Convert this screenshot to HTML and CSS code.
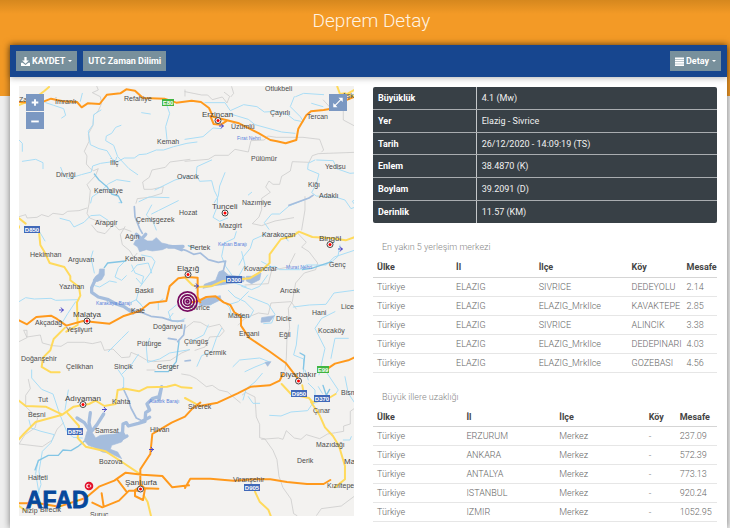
FILE: index.html
```html
<!DOCTYPE html>
<html lang="tr">
<head>
<meta charset="utf-8">
<title>Deprem Detay</title>
<link rel="stylesheet" href="styles.css">
</head>
<body>
<div class="page">
  <header class="banner"><h1>Deprem Detay</h1></header>
  <main class="panel">
    <div class="toolbar">
      <button class="btn" type="button">
        <svg class="icon" viewBox="0 0 16 16" aria-hidden="true"><path d="M6 0h4v6h4L8 12 2 6h4zM0 10h3l5 4 5-4h3v6H0z" fill="#fff"/></svg>
        KAYDET <span class="caret"></span>
      </button>
      <button class="btn" type="button">UTC Zaman Dilimi</button>
      <button class="btn btn-end" type="button">
        <svg class="icon" viewBox="0 0 16 16" aria-hidden="true"><path d="M0 1h16v3H0zM0 5h16v3H0zM0 9h16v3H0zM0 13h16v3H0z" fill="#fff"/></svg>
        Detay <span class="caret"></span>
      </button>
    </div>
    <div class="content">
      <div class="map">
        <svg class="map-canvas" viewBox="19 86 335 430" role="img" aria-label="Harita">
          <rect x="19" y="86" width="335" height="430" fill="#f3f2f0"/>
          <g transform="translate(15 80) scale(.3333)">
            <g class="border">
              <path d="M245 18l5 12-18 8 24 12 4 20-10 22-14 14-2 30-14 26 2 22-14 30 8 14-2 24 12 14 10 6 14-6-8 20-26 28 10 18-4 40-6 28 8 14 20 8 14-2 20 16 16-6 18 20 14-4 22 8M12 410l20-6 4 10 30-2 14-8 20 6 14-10 30 4 14-10 34-2 24-8M525 238l-60 8-14 16-40 8-8 22-20 14 4 22 24 0 34-8-4 20-38 12-36 4-4 14"/>
              <path d="M510 35l50 10 18 0 14 14 30-8 14 18 8-20-16-12M650 20l6 20-8 10M510 244l70-6 20-12 40 0 20-18 40 8 8-34 40-2 10-12 26 4 80 0 50 6 12 32-6 6M925 60l20 22 40 4 0 34 34 18M510 30v18M1020 217l-110 4-18 6-10 20-50-2-6 28-26 16-6 24-20 0-12-10-10 18 14 16-26 18 0 34-8 22-20 20 28 6 40-14 56-10M870 350l0 40 -10 60"/>
            </g>
            <g class="river">
              <path d="M202 40l-6 24M92 68l24 8 30 10 6 20-12 8M258 90l-22 14-2 30-14 20 6 40 26 12 24 6 16 26 14 8 22-12 30 0 14-10 22-2 30-12 22 0 30-10 40-10 30-4M318 136l-16 6-12 18-16 8-2 14 24 14 12 34 34 36 26 18M305 232l-4 12-44 6-24 8-4 18-30 8-40 12-14-14-8-20M450 60l14 40-12 40 4 38M12 180l10 10 0 24M22 244l40-6 22 10 0 18M345 305l-40-6-24 12-20 20-30 20-4 18M135 415l30 8 12 18 30-14 20-20 28-2 24 16M380 98l26 4M320 368l-8 0M372 365l30-14 60 2M410 375l-16 30 20 20 10 25M420 330l60-30 44-12M490 362l-60 30-20 10"/>
              <path d="M570 68l60 0 16 24 40-18 40 6 22 16 40-2 30 10 20 16 20 4M510 178l54-8 30-26 24 2M640 100l60 18 20 16 80 22 40 4M838 50l-12 30 30 30 10 16M842 50l24-10 60 4M890 70l34 10M590 240l-44 20-2 24 10 20 36-2 8 30 10 20-2 30-12 30 20 12 24-10M630 278l-16 40-4 30-12 20M900 240l-20 10-2 18 34 14-8 30-14 26 14 10 60 4 26 8 18 26 16-6-12-16 26-14M905 240l50 2 10 24 40 14 26-2M894 346l-12 8-60 24-28 24-24 0-22 26 14 20M700 345l10-8"/>
            </g>
            <g class="river deep"><path d="M238 282l14 18 24 20 14 22 20 6 10 20"/></g>
            <g class="river wide"><path d="M358 380l2 30 14 36 8 14M894 346l-12 8-60 22"/></g>
            <g class="road yellow"><path d="M12 75l20-8 32-16 24-18 14-12M967 20l8 22 16-2 26 10M993 44l24-14M12 415l20 16"/></g>
            <g class="road"><path d="M12 66l60 4 36-14 36 8 42 2 14 16 18-12 36 2 22-28 40-4 18-12 26 4 24 22 64 2 36 12 46-6 28 4 24 18 12 26 24 6 54 14 60 30 34 20 20 4 26 6 32-10 6-34 24-40 14-12 38-4 36-6 28-22 24-10M586 108l10 24 22 2 18-12"/></g>
          </g>
          <g transform="translate(15 225) scale(.3333)">
            <g class="border">
              <path d="M230 0l16 20 24 6 20-22M330 5l-14 24 6 30 22 18 12 20 10-12M12 350l24-12-10-22 10 0 0 20 40-6 6 24 30 8 26 2 20-12 50 0 24 4 26-6 10 26 26-4 26 26 24-2 4-14 24 10 24 14 20 4 50-4 34-22 24-10"/>
              <path d="M510 310l26-20 20 2 24 14 34-8 14 20-14 16-30 2-14 30-30 10M670 300l20-20 40-16 30 4 8-34 60-4 16 22M844 20l30 32-14 14 22 14 26 34-6 20-34 10-26 30-10 56-12 20 4 60-8 30-2 60-4 36M690 180l70-4 10-40 50-10 20-40"/>
            </g>
            <g class="river">
              <path d="M12 230l20-12 26 4 50-2 14 6 70-2M70 14l20 34M182 230l-24 36-18 30M234 78l-6 20 10 46M240 182l14 4 30-18 20 4M330 108l-20 20-10 28 20 10 14-14M350 140l16-20 34-6 10 30M350 120l10 24 26 10-6 24-16-18M380 90l30 6 10 14-14 34-30 40M370 200l-6 26 20 20M348 232l16-8 14 14M444 222l-14 10 0 22M474 265l-14 18 28 8 22-10M340 320l-20 20-40 40M370 388l-20 30-30 30M404 340l-10 26 4 46 36-10 30-18 60-10M484 240l-24 20 8 26"/>
              <path d="M664 20l-6 20-30 14-8 40 12 30 20 28M760 24l-46 20-8 26-20 24-14 26M680 80l10 40-20 36M740 110l30 16M694 186l-46-16-30 10M640 196l20 20 30 14 26 26-12 22-24-6M700 200l-30 30-26 8M620 224l24 24 6 24M560 224l26 16 22-14M750 130l30-6 14 10 60 0 20-14 60 0 24-24 60-20M758 150l-24 34-24 10-30-10M975 60l-6 34-16 14M800 24l20 24M1017 196l-60 8-24 34-50 2-48 6M960 260l-40 20-20 30 30 60-18 80M700 214l60 24 20 30-10 26-24 2M580 300l-14 30-40 20M620 310l-16 30-14 40-30 12-14 32M1000 340l-40 0-12 60M850 300l-6 60-8 30 30 12 0 40M654 425l20-20 60-6 30 12M690 440l30-14 40-16"/>
            </g>
            <g class="lake">
              <path d="M362 46l20-6 16 8 14 0 12-10 16 16 18 4 2 8-18 8-30 4-18-4-20 6-6-14-12-8zM254 132l14 0 0 18-8 14-14 6-12-4 8-12 10-8zM568 178l34-12 10-26 12-4 16 14 50 6-4 14-44 6-44 6-34 8zM694 154l24 0 20-10-4 20-24 12-16-8zM550 228l26-8 40-8 2 12-34 16-30 2z"/>
              <path d="M740 278l38-6-14 18-26 2zM750 412l18-2-10 14z"/>
            </g>
            <g class="inlet"><path d="M364 28l16 14 12-14M450 62l28 4 22 8M258 150l-18 16-10 22 0 14 20 14 30 8 22 12 24 8 28 20M460 66l44-2"/></g>
            <g class="river wide"><path d="M480 66l32 10 24 12 20-4 24 20 30 8 22-4-8 34M334 250l44 12 30 12 34 4 30 10 34 0M510 300l-4 30-18 20M510 408l16-2M460 340l24 4"/></g>
            <g class="river deep"><path d="M268 128l10-14 54-6M540 70l-20-8M862 134l28-4 60-20M855 384l14 8-4 40M492 350l-8 60-24 30-40 0"/></g>
            <g class="road yellow"><path d="M12 8l0-4M72 20l4 40 12 20 16 34 44 12 18 28 0 12 26 20 4 26-10 20 2 68-34 20M150 308l-34 34-10 34-22 22-4 28 28 16 26 0M512 160l20 20 16 6 40-2 36-16 80-8 30-18 30-28 0-26 34-46 34-8 20-14 40 16 60 4 40 6 40-14 20-4"/></g>
            <g class="road"><path d="M12 286l24 12 28-22 44-4 18 10 28 20 50-14 80 8 40-22 50-16 30-24 50-6 10-44 26-24 28-4 30 2 0 58 8 16M530 232l20-4 24-12 28-2 24 18 20 8 12 22 20 12 0 28 24 36 60 40 50 36 36 46M930 436l30-20 40-10 17-8"/></g>
          </g>
          <g transform="translate(15 370) scale(.3333)">
            <g class="border">
              <path d="M40 28l6 28-14 20 0 34 36 34-8 30-30 20-18 28 70 8 30-20 14-32 20-20M500 12l24 4 20 10 30 24 18-4 20 14 26 6 28 24 10 8M682 75l10-8 28 14 4 60 10 22 0 40 16 4 24 34 12 28 6 50 12 34 24 34 8 44 10 6M740 208l50-4 14 4 10-26 24 22 20 4 16-14 40 12 24-14 24-4 24-4 0-16 20-6 0-38 14-10M905 436l14-20 60-8 40-30M420 0l-24 0"/>
            </g>
            <g class="river">
              <path d="M50 0l0 24 30 34 34 14 20 60 20 50 20 20 28 2M42 150l6 24 30 10 40 10-10 24-26 26-10 60 6 40-10 30M70 270l-8 40 10 60M160 60l-10 60M310 0l16 24 0 30M684 90l10-34 26-20 22-26M700 80l14 20 20 0M764 136l34 2 30-12 50-4 14-20 20-8M880 40l20 20 0 26M930 0l40 60-10 14M910 50l12 20M990 20l10 50 20 30M985 210l20 0 4-10M870 0l10 30"/>
            </g>
            <g class="river deep"><path d="M60 300l10-28 30-16 30 0 14-16 24 2 20-12 20-16M944 58l-10 18-10-30"/></g>
            <g class="river wide"><path d="M324 54l14 30 10 30 16 30 24 12"/></g>
            <g class="lake">
              <path d="M216 184l16 4 10 16 14-8 44-4 24-8 8 12-12 20-30 10-4 12 22 8 12 20-34-16-24-4-20-12-22-8-12-14z"/>
            </g>
            <g class="inlet"><path d="M186 144l22 14 12 18 6 18M226 128l-4 30 6 24M266 132l-20 32-16 20M322 200l2-38 10-4 6 10 30-8 20-6 2-26 12-8-8-18 16-16 20-6 8-30-8 40M318 208l18-10M384 152l20-10"/></g>
            <g class="road yellow"><path d="M12 92l20 16 60 2 50 24 34-24 46-8 20-10 26 16 34-6 6-42 24-4 40 8 24-12 60-2 24-6 20 8 30 2M158 130l34 38-4 36 24 26 60 14 40 26 60 40M12 208l14-16 36-36 80-22M510 84l30 16 14 8M800 42l28 30 54 12 10 12 40-6 30-18M862 46l6 34M888 96l26 40 16 36 24 26 18 30 18 60 0 40-30 24M720 365l14 30 26 24 10 26M386 376l12 20 10 42M12 408l20 14"/></g>
            <g class="road"><path d="M12 400l60 0 60 10 80-26 40-34 46-18 34-24 50 6 60 4 30 34 50-6M232 398l30 14 50-20 30-30 34 0 0-44 0-20 30-46 6-60 34-20 24-14 40-18 20-22 26-20M554 108l54-10 60-28 40-20 56-4 30-14 10-20M308 330l26 34M260 370l6 40M376 350l-16 10 0 18 24 12 6-34-12-12M510 354l16-28 60 0 70 6 60-4 50 0 50 8 60 6 50 0 20-12M430 356l-60-2"/></g>
          </g>
          <g class="city">
            <circle cx="218" cy="120.500" r="3"/><circle cx="225" cy="213" r="3"/><circle cx="330" cy="244.500" r="3"/><circle cx="188" cy="274.500" r="3"/><circle cx="87" cy="321" r="3"/><circle cx="298.500" cy="381" r="3"/><circle cx="83" cy="404.500" r="3"/><circle cx="140.500" cy="489" r="3"/>
          </g>
          <g class="city-dot">
            <circle cx="218" cy="120.500" r="1.500"/><circle cx="225" cy="213" r="1.500"/><circle cx="330" cy="244.500" r="1.500"/><circle cx="188" cy="274.500" r="1.500"/><circle cx="87" cy="321" r="1.500"/><circle cx="298.500" cy="381" r="1.500"/><circle cx="83" cy="404.500" r="1.500"/><circle cx="140.500" cy="489" r="1.500"/>
          </g>
          <path class="plane" d="M219 126h5M221 123.500l2 2.500-2 2.500M338 249h5M340 246.500l2 2.500-2 2.500M194 286h5M196 283.500l2 2.500-2 2.500M59 310h5M61 307.500l2 2.500-2 2.500M102 409.500h5M104 407l2 2.500-2 2.500M149 449.500h5M151 447l2 2.500-2 2.500"/>
          <g class="town">
            <text x="19" y="102">Zara</text><text x="55" y="104">İmranlı</text><text x="124" y="101">Refahiye</text><text x="265" y="91">Otlukbeli</text><text x="342" y="98">Aşk</text><text x="270" y="115">Çayırlı</text><text x="307" y="119">Tercan</text><text x="231" y="129">Üzümlü</text><text x="157" y="144">Kemah</text><text x="110" y="165">İliç</text><text x="56" y="177">Divriği</text><text x="94" y="193">Kemaliye</text><text x="177" y="179">Ovacık</text><text x="251" y="161">Pülümür</text><text x="325" y="169">Yedisu</text><text x="308" y="187">Kiğı</text><text x="319" y="198">Adaklı</text><text x="242" y="205">Nazımiye</text><text x="179" y="215">Hozat</text><text x="136" y="222">Çemişgezek</text><text x="95" y="225">Arapgir</text><text x="219" y="228">Mazgirt</text>
            <text x="262" y="237">Karakoçan</text><text x="125" y="239">Ağın</text><text x="190" y="250">Pertek</text><text x="30" y="257">Hekimhan</text><text x="68" y="262">Arguvan</text><text x="125" y="261">Keban</text><text x="244" y="271">Kovancılar</text><text x="329" y="267">Genç</text><text x="59" y="289">Yazıhan</text><text x="135" y="293">Baskil</text><text x="280" y="293">Arıcak</text><text x="131" y="313">Kale</text><text x="189" y="310">Sivrice</text><text x="228" y="318">Maden</text><text x="35" y="325">Akçadağ</text><text x="66" y="332">Yeşilyurt</text><text x="153" y="329">Doğanyol</text><text x="276" y="321">Dicle</text><text x="312" y="315">Hani</text><text x="341" y="309">Lice</text><text x="239" y="336">Ergani</text><text x="279" y="337">Eğil</text><text x="318" y="333">Kocaköy</text><text x="137" y="346">Pütürge</text><text x="184" y="344">Çüngüş</text><text x="204" y="355">Çermik</text><text x="21" y="361">Doğanşehir</text><text x="66" y="369">Çelikhan</text><text x="114" y="369">Sincik</text><text x="157" y="369">Gerger</text>
            <text x="38" y="402">Tut</text><text x="28" y="417">Besni</text><text x="112" y="404">Kahta</text><text x="188" y="409">Siverek</text><text x="95" y="433">Samsat</text><text x="150" y="432">Hilvan</text><text x="99" y="464">Bozova</text><text x="28" y="480">Halfeti</text><text x="22" y="513">Nizip</text><text x="40" y="512">Birecik</text><text x="90" y="517">Suruç</text><text x="313" y="413">Çınar</text><text x="341" y="395">Bism</text><text x="316" y="447">Mazıdağı</text><text x="297" y="463">Derik</text><text x="233" y="482">Viranşehir</text><text x="327" y="488">Kızıltepe</text>
          </g>
          <g class="capital">
            <text x="202" y="117">Erzincan</text><text x="212" y="209">Tunceli</text><text x="319" y="241">Bingöl</text><text x="177" y="271">Elazığ</text><text x="73" y="317">Malatya</text><text x="280" y="377">Diyarbakır</text><text x="65" y="401">Adıyaman</text><text x="125" y="485">Şanlıurfa</text><text x="344" y="464">Ma</text>
          </g>
          <g class="water-name">
            <text x="237" y="140">Fırat Nehri</text><text x="218" y="246">Keban Barajı</text><text x="96" y="305">Karakaya Barajı</text><text x="286" y="269">Murat Nehri</text><text x="149" y="403">Atatürk Barajı</text>
          </g>
          <g class="shield">
            <rect class="green" x="162" y="99" width="12" height="7"/><rect class="green" x="317" y="366" width="12" height="7"/>
            <rect x="24" y="226" width="16" height="7"/><rect x="226" y="276" width="16" height="7"/><rect x="67" y="428" width="16" height="7"/><rect x="291" y="390" width="16" height="7"/><rect x="314" y="395" width="16" height="7"/><rect x="244" y="484" width="16" height="7"/>
            <text x="168" y="105">E80</text><text x="323" y="372">E99</text><text x="32" y="232">D850</text><text x="234" y="282">D300</text><text x="75" y="434">D875</text><text x="299" y="396">D950</text><text x="322" y="401">D370</text><text x="252" y="490">D905</text>
          </g>
          <g class="epicenter"><circle cx="187.500" cy="301.500" r="9.600"/><circle cx="187.500" cy="301.500" r="6.600"/><circle cx="187.500" cy="301.500" r="3.800"/><circle cx="187.500" cy="301.500" r="1.300"/></g>
          <text class="logo" x="26" y="508">AFAD</text>
          <circle cx="89" cy="486" r="4.300" fill="#e2102a"/><circle cx="88.500" cy="486" r="2.300" fill="#fff"/><circle cx="89.200" cy="486" r="1.800" fill="#e2102a"/><circle cx="90.600" cy="486" r=".8" fill="#fff"/>
        </svg>
        <div class="zoom">
          <button class="map-btn" type="button" aria-label="Yakınlaştır"><svg viewBox="0 0 18 18"><path d="M9 5.500v7M5.500 9h7" stroke="#fff" stroke-width="2"/></svg></button>
          <button class="map-btn" type="button" aria-label="Uzaklaştır"><svg viewBox="0 0 18 18"><path d="M5 10h8" stroke="#fff" stroke-width="2"/></svg></button>
        </div>
        <button class="map-btn fullscreen" type="button" aria-label="Tam ekran"><svg viewBox="0 0 18 18"><path d="M5.500 12.500l7-7" stroke="#fff" stroke-width="1.200"/><path d="M9.500 4H14v4.500zM4 9.500V14h4.500z" fill="#fff"/></svg></button>
      </div>
      <div class="info">
        <table class="summary">
          <tr><th scope="row">Büyüklük</th><td>4.1 (Mw)</td></tr>
          <tr><th scope="row">Yer</th><td>Elazig - Sivrice</td></tr>
          <tr><th scope="row">Tarih</th><td>26/12/2020 - 14:09:19 (TS)</td></tr>
          <tr><th scope="row">Enlem</th><td>38.4870 (K)</td></tr>
          <tr><th scope="row">Boylam</th><td>39.2091 (D)</td></tr>
          <tr><th scope="row">Derinlik</th><td>11.57 (KM)</td></tr>
        </table>
        <section class="places">
          <h2>En yakın 5 yerleşim merkezi</h2>
          <table class="list">
            <colgroup><col class="w23"><col class="w24"><col class="w27"><col class="w16"><col></colgroup>
            <thead><tr><th>Ülke</th><th>İl</th><th>İlçe</th><th>Köy</th><th>Mesafe</th></tr></thead>
            <tbody>
              <tr><td>Türkiye</td><td>ELAZIG</td><td>SIVRICE</td><td>DEDEYOLU</td><td>2.14</td></tr>
              <tr><td>Türkiye</td><td>ELAZIG</td><td>ELAZIG_MrkIlce</td><td>KAVAKTEPE</td><td>2.85</td></tr>
              <tr><td>Türkiye</td><td>ELAZIG</td><td>SIVRICE</td><td>ALINCIK</td><td>3.38</td></tr>
              <tr><td>Türkiye</td><td>ELAZIG</td><td>ELAZIG_MrkIlce</td><td>DEDEPINARI</td><td>4.03</td></tr>
              <tr><td>Türkiye</td><td>ELAZIG</td><td>ELAZIG_MrkIlce</td><td>GOZEBASI</td><td>4.56</td></tr>
            </tbody>
          </table>
        </section>
        <section class="places">
          <h2>Büyük illere uzaklığı</h2>
          <table class="list">
            <colgroup><col class="w26"><col class="w27"><col class="w26"><col class="w9"><col></colgroup>
            <thead><tr><th>Ülke</th><th>İl</th><th>İlçe</th><th>Köy</th><th>Mesafe</th></tr></thead>
            <tbody>
              <tr><td>Türkiye</td><td>ERZURUM</td><td>Merkez</td><td>-</td><td>237.09</td></tr>
              <tr><td>Türkiye</td><td>ANKARA</td><td>Merkez</td><td>-</td><td>572.39</td></tr>
              <tr><td>Türkiye</td><td>ANTALYA</td><td>Merkez</td><td>-</td><td>773.13</td></tr>
              <tr><td>Türkiye</td><td>ISTANBUL</td><td>Merkez</td><td>-</td><td>920.24</td></tr>
              <tr><td>Türkiye</td><td>IZMIR</td><td>Merkez</td><td>-</td><td>1052.95</td></tr>
            </tbody>
          </table>
        </section>
      </div>
    </div>
  </main>
</div>
</body>
</html>
```
FILE: styles.css
```css
* { box-sizing: border-box; }

body {
  margin: 0;
  font: 9px/12px Roboto, "Liberation Sans", sans-serif;
  color: #8a8a8a;
}

.page {
  display: flex;
  flex-direction: column;
  min-height: 100vh;
  padding: 0 3px 0 10px;
  background:
    linear-gradient(rgba(110, 70, 0, .22), rgba(110, 70, 0, 0)) 0 0 / 100% 14px no-repeat,
    linear-gradient(#f39a26, #f39a26) 0 0 / 100% 96px no-repeat,
    #efefef;
}

.banner {
  height: 45px;
  padding-top: 8px;
  text-align: center;
}

.banner h1 {
  margin: 0 0 0 6px;
  font-size: 19px;
  line-height: 26px;
  font-weight: 300;
  color: #fff3e2;
}

.panel {
  flex: 1;
  background: #fff;
  box-shadow: 0 0 7px rgba(0, 0, 0, .5);
}

.toolbar {
  display: flex;
  gap: 6px;
  padding: 6px;
  background: #17468f;
  box-shadow: 0 1px 6px rgba(0, 0, 0, .3);
}

.btn {
  display: flex;
  align-items: center;
  gap: 2px;
  height: 20px;
  padding: 0 5px;
  border: 0;
  background: #78909c;
  color: #fff;
  font: bold 9px/12px Roboto, "Liberation Sans", sans-serif;
}

.btn-end { margin-left: auto; }

.icon { width: 9px; height: 9px; }

.caret {
  margin-left: 1px;
  border: 2px solid transparent;
  border-top-color: #fff;
  border-bottom: 0;
}

.content {
  display: grid;
  grid-template-columns: 335fr 344fr;
  gap: 19px;
  align-items: start;
  padding: 9px 10px 5px 9px;
}

.map { position: relative; }

.map-canvas {
  display: block;
  width: 100%;
  font-family: "Liberation Sans", Arial, sans-serif;
}

.border, .river, .road, .inlet {
  fill: none;
  stroke-linejoin: round;
  stroke-linecap: round;
}

.border { stroke: #c4c4c4; stroke-width: 2; }
.river { stroke: #a9ddf6; stroke-width: 3; }
.river.deep { stroke: #83c5e5; stroke-width: 4; }
.river.wide { stroke: #a5bddd; stroke-width: 5; }
.lake { fill: #a5bddd; stroke: #a5bddd; stroke-width: 2; stroke-linejoin: round; }
.inlet { stroke: #a5bddd; stroke-width: 10; }
.road { stroke: #ff991c; stroke-width: 6; }
.road.yellow { stroke: #ffda5c; }
.city { fill: #fff; stroke: #444; stroke-width: 1; }
.city-dot { fill: #f00; }
.plane { fill: none; stroke: #4a46c8; stroke-width: 1; }
.town { font-size: 7px; fill: #4c4c4c; }
.capital { font-size: 8px; fill: #444; }
.water-name { font-size: 5px; fill: #5b83dc; }
.shield rect { fill: #4068b8; }
.shield .green { fill: #41b541; }
.shield text { font-size: 6px; font-weight: bold; fill: #fff; text-anchor: middle; }
.epicenter { fill: none; stroke: #770b60; stroke-width: 1.8; }
.logo { font-size: 23px; font-weight: bold; fill: #06489c; stroke: #06489c; stroke-width: .8; }

.zoom {
  position: absolute;
  top: 8px;
  left: 7px;
  display: grid;
  gap: 1px;
}

.map-btn {
  display: block;
  width: 18px;
  height: 17px;
  padding: 0;
  border: 0;
  background: #7b98c2;
}

.map-btn svg { display: block; width: 100%; height: 100%; }

.fullscreen {
  position: absolute;
  top: 8px;
  right: 7px;
}

.info { padding-top: 1px; }

table {
  width: 100%;
  border-collapse: collapse;
}

th { text-align: left; font-weight: bold; }

.summary {
  height: 136px;
  overflow: hidden;
  border-radius: 2px;
  background: #384046;
  color: #f0f0f0;
}

.summary th, .summary td {
  height: 22px;
  padding: 0 5px;
  border-bottom: 1px solid #a9adb0;
}

.summary th {
  width: 30%;
  border-right: 1px solid #c4c7c9;
  color: #fff;
}

.summary tr:last-child > * { border-bottom: 0; }

.places { padding-top: 18px; }

.places h2 {
  margin: 0 0 5px 9px;
  font-size: 9px;
  line-height: 12px;
  font-weight: 300;
  color: #888;
}

.list { table-layout: fixed; }

.list th, .list td {
  height: 19px;
  padding: 0 4px;
  border-bottom: 1px solid #e6e6e6;
  white-space: nowrap;
}

.list th { border-color: #d5d5d5; color: #444; }
.list td { font-weight: 300; color: #666; }

.w9 { width: 9%; }
.w16 { width: 16%; }
.w23 { width: 23%; }
.w24 { width: 24%; }
.w26 { width: 26%; }
.w27 { width: 27%; }
```
